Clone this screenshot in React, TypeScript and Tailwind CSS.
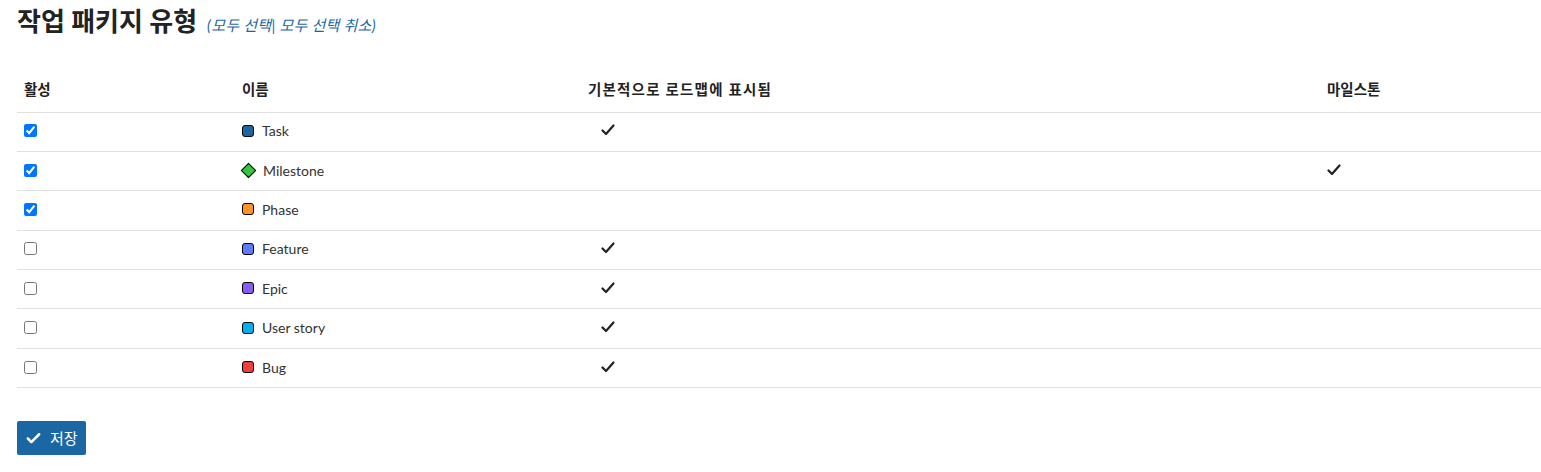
import { Check } from 'lucide-react';

const TYPES = [
  { name: 'Task', color: '#1a67a3', active: true, roadmap: true, milestone: false },
  { name: 'Milestone', color: '#35c53f', active: true, roadmap: false, milestone: true },
  { name: 'Phase', color: '#ff922b', active: true, roadmap: false, milestone: false },
  { name: 'Feature', color: '#5c7cfa', active: false, roadmap: true, milestone: false },
  { name: 'Epic', color: '#845ef7', active: false, roadmap: true, milestone: false },
  { name: 'User story', color: '#00b0f0', active: false, roadmap: true, milestone: false },
  { name: 'Bug', color: '#f03e3e', active: false, roadmap: true, milestone: false },
];

function Tick() {
  return (
    <svg width="14" height="12" viewBox="0 0 14 12" className="block">
      <path d="M1.5 6.5 L5 10 L12.5 1.5" fill="none" stroke="#222" strokeWidth="2.2" strokeLinecap="round" strokeLinejoin="round" />
    </svg>
  );
}

export default function App() {
  return (
    <div className="pl-[17px] pt-[5px] text-[#333] bg-white min-h-[472px]" style={{ fontFamily: 'Lato, "Noto Sans CJK KR", sans-serif' }}>
      <div className="flex items-baseline gap-[10px] h-[32px]">
        <h2 className="text-[26px] font-bold text-[#222] leading-[32px]">작업 패키지 유형</h2>
        <span className="text-[15px] italic text-[#1a67a3] tracking-[0.3px]">(모두 선택| 모두 선택 취소)</span>
      </div>

      <table className="w-full mt-[36px] text-[14px] border-collapse">
        <thead>
          <tr className="border-b border-[#e0e0e0] h-[39px] text-left">
            <th className="w-[218px] font-semibold text-[14.5px] text-[#222] px-[7px] pb-[5px]">활성</th>
            <th className="w-[346px] font-semibold text-[14.5px] text-[#222] px-[7px] pb-[5px]">이름</th>
            <th className="w-[739px] font-semibold text-[14.5px] text-[#222] px-[7px] pb-[5px] tracking-[1.2px]">기본적으로 로드맵에 표시됨</th>
            <th className="font-semibold text-[14.5px] text-[#222] px-[7px] pb-[5px]">마일스톤</th>
          </tr>
        </thead>
        <tbody>
          {TYPES.map((t) => (
            <tr key={t.name} className="border-b border-[#e0e0e0] h-[39.4px]">
              <td className="px-[7px] pb-[2px]">
                <input type="checkbox" defaultChecked={t.active} className="block w-[13px] h-[13px] m-0 accent-[#0075ff]" />
              </td>
              <td className="px-[7px] pb-[2px]">
                <div className="flex items-center gap-[8px]">
                  {t.name === 'Milestone' ? (
                    <span className="w-[11px] h-[11px] mx-[1px] rotate-45 border border-black" style={{ background: t.color }} />
                  ) : (
                    <span className="w-[12px] h-[12px] rounded-[3px] border border-black" style={{ background: t.color }} />
                  )}
                  <span className="text-[#333]">{t.name}</span>
                </div>
              </td>
              <td className="px-[20px] pb-[3px]">{t.roadmap && <Tick />}</td>
              <td className="px-[7px] pb-[3px]">{t.milestone && <Tick />}</td>
            </tr>
          ))}
        </tbody>
      </table>

      <button className="mt-[33px] h-[34px] pl-[8px] pr-[8px] flex items-center gap-[8px] bg-[#1a67a3] text-white rounded-[2px] text-[15px]">
        <Check size={17} strokeWidth={3.5} />
        <span>저장</span>
      </button>
    </div>
  );
}
